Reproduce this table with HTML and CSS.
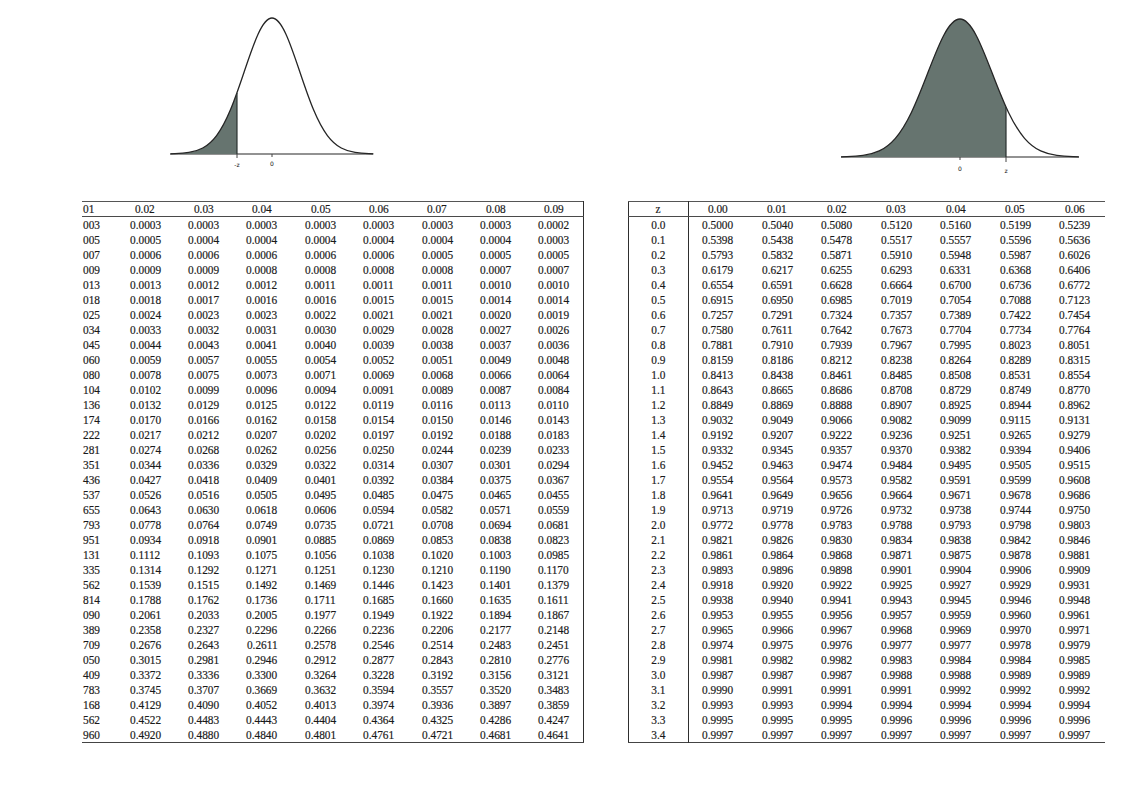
FILE: index.html
```html
<!DOCTYPE html>
<html lang="en">
<head>
<meta charset="utf-8">
<title>Standard normal distribution tables</title>
<link rel="stylesheet" href="styles.css">
</head>
<body>
<div class="page">
  <div class="figs">
    <svg class="fig fig-left" width="230" height="165" viewBox="0 0 230 165">
      <line class="base" x1="10" y1="144" x2="213" y2="144"/>
      <svg x="10.6" y="5.3" width="202.8" height="141.4" viewBox="-3.66 -1.02 7.32 1.04" preserveAspectRatio="none">
        <path class="shade" d="M-4,0 L-4,-0.000335 C-3.8333,-0.00056 -3.6667,-0.00091 -3.5,-0.00219 C-3.3333,-0.00347 -3.1667,-0.00555 -3,-0.01111 C-2.8333,-0.01667 -2.6667,-0.02563 -2.5,-0.04394 C-2.3333,-0.06225 -2.1667,-0.09023 -2,-0.13534 C-1.8333,-0.18045 -1.6667,-0.24349 -1.5,-0.32465 C-1.42167,-0.36279 -1.34333,-0.40476 -1.265,-0.44928 L-1.265,0 Z"/>
        <path class="curve" vector-effect="non-scaling-stroke" d="M-4,-0.000335 C-3.8333,-0.00056 -3.6667,-0.00091 -3.5,-0.00219 C-3.3333,-0.00347 -3.1667,-0.00555 -3,-0.01111 C-2.8333,-0.01667 -2.6667,-0.02563 -2.5,-0.04394 C-2.3333,-0.06225 -2.1667,-0.09023 -2,-0.13534 C-1.8333,-0.18045 -1.6667,-0.24349 -1.5,-0.32465 C-1.3333,-0.40581 -1.1667,-0.50544 -1,-0.60653 C-0.8333,-0.70762 -0.6667,-0.80896 -0.5,-0.8825 C-0.3333,-0.95604 -0.1667,-1 0,-1 C0.1667,-1 0.3333,-0.95604 0.5,-0.8825 C0.6667,-0.80896 0.8333,-0.70762 1,-0.60653 C1.1667,-0.50544 1.3333,-0.40581 1.5,-0.32465 C1.6667,-0.24349 1.8333,-0.18045 2,-0.13534 C2.1667,-0.09023 2.3333,-0.06225 2.5,-0.04394 C2.6667,-0.02563 2.8333,-0.01667 3,-0.01111 C3.1667,-0.00555 3.3333,-0.00347 3.5,-0.00219 C3.6667,-0.00091 3.8333,-0.00056 4,-0.000335"/>
        <line class="edge" vector-effect="non-scaling-stroke" x1="-1.265" y1="-0.44928" x2="-1.265" y2="0"/>
      </svg>
      <line class="tick" x1="77" y1="144" x2="77" y2="148"/>
      <line class="tick" x1="112" y1="144" x2="112" y2="147"/>
      <text class="lbl" x="77" y="157">-z</text>
      <text class="lbl" x="112" y="156">0</text>
    </svg>
    <svg class="fig fig-right" width="260" height="170" viewBox="0 0 260 170">
      <line class="base" x1="11" y1="147" x2="249" y2="147"/>
      <svg x="11.1" y="6.24" width="237.7" height="143.5" viewBox="-3.68 -1.02 7.36 1.04" preserveAspectRatio="none">
        <path class="shade" d="M-4,0 L-4,-0.000335 C-3.8333,-0.00056 -3.6667,-0.00091 -3.5,-0.00219 C-3.3333,-0.00347 -3.1667,-0.00555 -3,-0.01111 C-2.8333,-0.01667 -2.6667,-0.02563 -2.5,-0.04394 C-2.3333,-0.06225 -2.1667,-0.09023 -2,-0.13534 C-1.8333,-0.18045 -1.6667,-0.24349 -1.5,-0.32465 C-1.3333,-0.40581 -1.1667,-0.50544 -1,-0.60653 C-0.8333,-0.70762 -0.6667,-0.80896 -0.5,-0.8825 C-0.3333,-0.95604 -0.1667,-1 0,-1 C0.1667,-1 0.3333,-0.95604 0.5,-0.8825 C0.6667,-0.80896 0.8333,-0.70762 1,-0.60653 C1.14167,-0.5206 1.28333,-0.43543 1.425,-0.36229 L1.425,0 Z"/>
        <path class="curve" vector-effect="non-scaling-stroke" d="M-4,-0.000335 C-3.8333,-0.00056 -3.6667,-0.00091 -3.5,-0.00219 C-3.3333,-0.00347 -3.1667,-0.00555 -3,-0.01111 C-2.8333,-0.01667 -2.6667,-0.02563 -2.5,-0.04394 C-2.3333,-0.06225 -2.1667,-0.09023 -2,-0.13534 C-1.8333,-0.18045 -1.6667,-0.24349 -1.5,-0.32465 C-1.3333,-0.40581 -1.1667,-0.50544 -1,-0.60653 C-0.8333,-0.70762 -0.6667,-0.80896 -0.5,-0.8825 C-0.3333,-0.95604 -0.1667,-1 0,-1 C0.1667,-1 0.3333,-0.95604 0.5,-0.8825 C0.6667,-0.80896 0.8333,-0.70762 1,-0.60653 C1.1667,-0.50544 1.3333,-0.40581 1.5,-0.32465 C1.6667,-0.24349 1.8333,-0.18045 2,-0.13534 C2.1667,-0.09023 2.3333,-0.06225 2.5,-0.04394 C2.6667,-0.02563 2.8333,-0.01667 3,-0.01111 C3.1667,-0.00555 3.3333,-0.00347 3.5,-0.00219 C3.6667,-0.00091 3.8333,-0.00056 4,-0.000335"/>
        <line class="edge" vector-effect="non-scaling-stroke" x1="1.425" y1="-0.36229" x2="1.425" y2="0"/>
      </svg>
      <line class="tick" x1="176" y1="147" x2="176" y2="152"/>
      <line class="tick" x1="130" y1="147" x2="130" y2="150"/>
      <text class="lbl" x="130" y="161">0</text>
      <text class="lbl" x="176" y="163">z</text>
    </svg>
  </div>
  <div class="tables">
    <table class="t t-left">
      <colgroup><col class="c-cut"><col class="c-val"><col class="c-val"><col class="c-val"><col class="c-val"><col class="c-val"><col class="c-val"><col class="c-val"><col class="c-val"></colgroup>
      <thead>
        <tr><th class="cut"><span>01</span></th><th><span>0.02</span></th><th><span>0.03</span></th><th><span>0.04</span></th><th><span>0.05</span></th><th><span>0.06</span></th><th><span>0.07</span></th><th><span>0.08</span></th><th><span>0.09</span></th></tr>
      </thead>
      <tbody>
        <tr><td class="cut"><span>003</span></td><td><span>0.0003</span></td><td><span>0.0003</span></td><td><span>0.0003</span></td><td><span>0.0003</span></td><td><span>0.0003</span></td><td><span>0.0003</span></td><td><span>0.0003</span></td><td><span>0.0002</span></td></tr>
        <tr><td class="cut"><span>005</span></td><td><span>0.0005</span></td><td><span>0.0004</span></td><td><span>0.0004</span></td><td><span>0.0004</span></td><td><span>0.0004</span></td><td><span>0.0004</span></td><td><span>0.0004</span></td><td><span>0.0003</span></td></tr>
        <tr><td class="cut"><span>007</span></td><td><span>0.0006</span></td><td><span>0.0006</span></td><td><span>0.0006</span></td><td><span>0.0006</span></td><td><span>0.0006</span></td><td><span>0.0005</span></td><td><span>0.0005</span></td><td><span>0.0005</span></td></tr>
        <tr><td class="cut"><span>009</span></td><td><span>0.0009</span></td><td><span>0.0009</span></td><td><span>0.0008</span></td><td><span>0.0008</span></td><td><span>0.0008</span></td><td><span>0.0008</span></td><td><span>0.0007</span></td><td><span>0.0007</span></td></tr>
        <tr><td class="cut"><span>013</span></td><td><span>0.0013</span></td><td><span>0.0012</span></td><td><span>0.0012</span></td><td><span>0.0011</span></td><td><span>0.0011</span></td><td><span>0.0011</span></td><td><span>0.0010</span></td><td><span>0.0010</span></td></tr>
        <tr><td class="cut"><span>018</span></td><td><span>0.0018</span></td><td><span>0.0017</span></td><td><span>0.0016</span></td><td><span>0.0016</span></td><td><span>0.0015</span></td><td><span>0.0015</span></td><td><span>0.0014</span></td><td><span>0.0014</span></td></tr>
        <tr><td class="cut"><span>025</span></td><td><span>0.0024</span></td><td><span>0.0023</span></td><td><span>0.0023</span></td><td><span>0.0022</span></td><td><span>0.0021</span></td><td><span>0.0021</span></td><td><span>0.0020</span></td><td><span>0.0019</span></td></tr>
        <tr><td class="cut"><span>034</span></td><td><span>0.0033</span></td><td><span>0.0032</span></td><td><span>0.0031</span></td><td><span>0.0030</span></td><td><span>0.0029</span></td><td><span>0.0028</span></td><td><span>0.0027</span></td><td><span>0.0026</span></td></tr>
        <tr><td class="cut"><span>045</span></td><td><span>0.0044</span></td><td><span>0.0043</span></td><td><span>0.0041</span></td><td><span>0.0040</span></td><td><span>0.0039</span></td><td><span>0.0038</span></td><td><span>0.0037</span></td><td><span>0.0036</span></td></tr>
        <tr><td class="cut"><span>060</span></td><td><span>0.0059</span></td><td><span>0.0057</span></td><td><span>0.0055</span></td><td><span>0.0054</span></td><td><span>0.0052</span></td><td><span>0.0051</span></td><td><span>0.0049</span></td><td><span>0.0048</span></td></tr>
        <tr><td class="cut"><span>080</span></td><td><span>0.0078</span></td><td><span>0.0075</span></td><td><span>0.0073</span></td><td><span>0.0071</span></td><td><span>0.0069</span></td><td><span>0.0068</span></td><td><span>0.0066</span></td><td><span>0.0064</span></td></tr>
        <tr><td class="cut"><span>104</span></td><td><span>0.0102</span></td><td><span>0.0099</span></td><td><span>0.0096</span></td><td><span>0.0094</span></td><td><span>0.0091</span></td><td><span>0.0089</span></td><td><span>0.0087</span></td><td><span>0.0084</span></td></tr>
        <tr><td class="cut"><span>136</span></td><td><span>0.0132</span></td><td><span>0.0129</span></td><td><span>0.0125</span></td><td><span>0.0122</span></td><td><span>0.0119</span></td><td><span>0.0116</span></td><td><span>0.0113</span></td><td><span>0.0110</span></td></tr>
        <tr><td class="cut"><span>174</span></td><td><span>0.0170</span></td><td><span>0.0166</span></td><td><span>0.0162</span></td><td><span>0.0158</span></td><td><span>0.0154</span></td><td><span>0.0150</span></td><td><span>0.0146</span></td><td><span>0.0143</span></td></tr>
        <tr><td class="cut"><span>222</span></td><td><span>0.0217</span></td><td><span>0.0212</span></td><td><span>0.0207</span></td><td><span>0.0202</span></td><td><span>0.0197</span></td><td><span>0.0192</span></td><td><span>0.0188</span></td><td><span>0.0183</span></td></tr>
        <tr><td class="cut"><span>281</span></td><td><span>0.0274</span></td><td><span>0.0268</span></td><td><span>0.0262</span></td><td><span>0.0256</span></td><td><span>0.0250</span></td><td><span>0.0244</span></td><td><span>0.0239</span></td><td><span>0.0233</span></td></tr>
        <tr><td class="cut"><span>351</span></td><td><span>0.0344</span></td><td><span>0.0336</span></td><td><span>0.0329</span></td><td><span>0.0322</span></td><td><span>0.0314</span></td><td><span>0.0307</span></td><td><span>0.0301</span></td><td><span>0.0294</span></td></tr>
        <tr><td class="cut"><span>436</span></td><td><span>0.0427</span></td><td><span>0.0418</span></td><td><span>0.0409</span></td><td><span>0.0401</span></td><td><span>0.0392</span></td><td><span>0.0384</span></td><td><span>0.0375</span></td><td><span>0.0367</span></td></tr>
        <tr><td class="cut"><span>537</span></td><td><span>0.0526</span></td><td><span>0.0516</span></td><td><span>0.0505</span></td><td><span>0.0495</span></td><td><span>0.0485</span></td><td><span>0.0475</span></td><td><span>0.0465</span></td><td><span>0.0455</span></td></tr>
        <tr><td class="cut"><span>655</span></td><td><span>0.0643</span></td><td><span>0.0630</span></td><td><span>0.0618</span></td><td><span>0.0606</span></td><td><span>0.0594</span></td><td><span>0.0582</span></td><td><span>0.0571</span></td><td><span>0.0559</span></td></tr>
        <tr><td class="cut"><span>793</span></td><td><span>0.0778</span></td><td><span>0.0764</span></td><td><span>0.0749</span></td><td><span>0.0735</span></td><td><span>0.0721</span></td><td><span>0.0708</span></td><td><span>0.0694</span></td><td><span>0.0681</span></td></tr>
        <tr><td class="cut"><span>951</span></td><td><span>0.0934</span></td><td><span>0.0918</span></td><td><span>0.0901</span></td><td><span>0.0885</span></td><td><span>0.0869</span></td><td><span>0.0853</span></td><td><span>0.0838</span></td><td><span>0.0823</span></td></tr>
        <tr><td class="cut"><span>131</span></td><td><span>0.1112</span></td><td><span>0.1093</span></td><td><span>0.1075</span></td><td><span>0.1056</span></td><td><span>0.1038</span></td><td><span>0.1020</span></td><td><span>0.1003</span></td><td><span>0.0985</span></td></tr>
        <tr><td class="cut"><span>335</span></td><td><span>0.1314</span></td><td><span>0.1292</span></td><td><span>0.1271</span></td><td><span>0.1251</span></td><td><span>0.1230</span></td><td><span>0.1210</span></td><td><span>0.1190</span></td><td><span>0.1170</span></td></tr>
        <tr><td class="cut"><span>562</span></td><td><span>0.1539</span></td><td><span>0.1515</span></td><td><span>0.1492</span></td><td><span>0.1469</span></td><td><span>0.1446</span></td><td><span>0.1423</span></td><td><span>0.1401</span></td><td><span>0.1379</span></td></tr>
        <tr><td class="cut"><span>814</span></td><td><span>0.1788</span></td><td><span>0.1762</span></td><td><span>0.1736</span></td><td><span>0.1711</span></td><td><span>0.1685</span></td><td><span>0.1660</span></td><td><span>0.1635</span></td><td><span>0.1611</span></td></tr>
        <tr><td class="cut"><span>090</span></td><td><span>0.2061</span></td><td><span>0.2033</span></td><td><span>0.2005</span></td><td><span>0.1977</span></td><td><span>0.1949</span></td><td><span>0.1922</span></td><td><span>0.1894</span></td><td><span>0.1867</span></td></tr>
        <tr><td class="cut"><span>389</span></td><td><span>0.2358</span></td><td><span>0.2327</span></td><td><span>0.2296</span></td><td><span>0.2266</span></td><td><span>0.2236</span></td><td><span>0.2206</span></td><td><span>0.2177</span></td><td><span>0.2148</span></td></tr>
        <tr><td class="cut"><span>709</span></td><td><span>0.2676</span></td><td><span>0.2643</span></td><td><span>0.2611</span></td><td><span>0.2578</span></td><td><span>0.2546</span></td><td><span>0.2514</span></td><td><span>0.2483</span></td><td><span>0.2451</span></td></tr>
        <tr><td class="cut"><span>050</span></td><td><span>0.3015</span></td><td><span>0.2981</span></td><td><span>0.2946</span></td><td><span>0.2912</span></td><td><span>0.2877</span></td><td><span>0.2843</span></td><td><span>0.2810</span></td><td><span>0.2776</span></td></tr>
        <tr><td class="cut"><span>409</span></td><td><span>0.3372</span></td><td><span>0.3336</span></td><td><span>0.3300</span></td><td><span>0.3264</span></td><td><span>0.3228</span></td><td><span>0.3192</span></td><td><span>0.3156</span></td><td><span>0.3121</span></td></tr>
        <tr><td class="cut"><span>783</span></td><td><span>0.3745</span></td><td><span>0.3707</span></td><td><span>0.3669</span></td><td><span>0.3632</span></td><td><span>0.3594</span></td><td><span>0.3557</span></td><td><span>0.3520</span></td><td><span>0.3483</span></td></tr>
        <tr><td class="cut"><span>168</span></td><td><span>0.4129</span></td><td><span>0.4090</span></td><td><span>0.4052</span></td><td><span>0.4013</span></td><td><span>0.3974</span></td><td><span>0.3936</span></td><td><span>0.3897</span></td><td><span>0.3859</span></td></tr>
        <tr><td class="cut"><span>562</span></td><td><span>0.4522</span></td><td><span>0.4483</span></td><td><span>0.4443</span></td><td><span>0.4404</span></td><td><span>0.4364</span></td><td><span>0.4325</span></td><td><span>0.4286</span></td><td><span>0.4247</span></td></tr>
        <tr><td class="cut"><span>960</span></td><td><span>0.4920</span></td><td><span>0.4880</span></td><td><span>0.4840</span></td><td><span>0.4801</span></td><td><span>0.4761</span></td><td><span>0.4721</span></td><td><span>0.4681</span></td><td><span>0.4641</span></td></tr>
      </tbody>
    </table>
    <table class="t t-right">
      <colgroup><col class="c-z"><col class="c-val2"><col class="c-val2"><col class="c-val2"><col class="c-val2"><col class="c-val2"><col class="c-val2"><col class="c-val2"></colgroup>
      <thead>
        <tr><th class="z"><span>z</span></th><th><span>0.00</span></th><th><span>0.01</span></th><th><span>0.02</span></th><th><span>0.03</span></th><th><span>0.04</span></th><th><span>0.05</span></th><th><span>0.06</span></th></tr>
      </thead>
      <tbody>
        <tr><td class="z"><span>0.0</span></td><td><span>0.5000</span></td><td><span>0.5040</span></td><td><span>0.5080</span></td><td><span>0.5120</span></td><td><span>0.5160</span></td><td><span>0.5199</span></td><td><span>0.5239</span></td></tr>
        <tr><td class="z"><span>0.1</span></td><td><span>0.5398</span></td><td><span>0.5438</span></td><td><span>0.5478</span></td><td><span>0.5517</span></td><td><span>0.5557</span></td><td><span>0.5596</span></td><td><span>0.5636</span></td></tr>
        <tr><td class="z"><span>0.2</span></td><td><span>0.5793</span></td><td><span>0.5832</span></td><td><span>0.5871</span></td><td><span>0.5910</span></td><td><span>0.5948</span></td><td><span>0.5987</span></td><td><span>0.6026</span></td></tr>
        <tr><td class="z"><span>0.3</span></td><td><span>0.6179</span></td><td><span>0.6217</span></td><td><span>0.6255</span></td><td><span>0.6293</span></td><td><span>0.6331</span></td><td><span>0.6368</span></td><td><span>0.6406</span></td></tr>
        <tr><td class="z"><span>0.4</span></td><td><span>0.6554</span></td><td><span>0.6591</span></td><td><span>0.6628</span></td><td><span>0.6664</span></td><td><span>0.6700</span></td><td><span>0.6736</span></td><td><span>0.6772</span></td></tr>
        <tr><td class="z"><span>0.5</span></td><td><span>0.6915</span></td><td><span>0.6950</span></td><td><span>0.6985</span></td><td><span>0.7019</span></td><td><span>0.7054</span></td><td><span>0.7088</span></td><td><span>0.7123</span></td></tr>
        <tr><td class="z"><span>0.6</span></td><td><span>0.7257</span></td><td><span>0.7291</span></td><td><span>0.7324</span></td><td><span>0.7357</span></td><td><span>0.7389</span></td><td><span>0.7422</span></td><td><span>0.7454</span></td></tr>
        <tr><td class="z"><span>0.7</span></td><td><span>0.7580</span></td><td><span>0.7611</span></td><td><span>0.7642</span></td><td><span>0.7673</span></td><td><span>0.7704</span></td><td><span>0.7734</span></td><td><span>0.7764</span></td></tr>
        <tr><td class="z"><span>0.8</span></td><td><span>0.7881</span></td><td><span>0.7910</span></td><td><span>0.7939</span></td><td><span>0.7967</span></td><td><span>0.7995</span></td><td><span>0.8023</span></td><td><span>0.8051</span></td></tr>
        <tr><td class="z"><span>0.9</span></td><td><span>0.8159</span></td><td><span>0.8186</span></td><td><span>0.8212</span></td><td><span>0.8238</span></td><td><span>0.8264</span></td><td><span>0.8289</span></td><td><span>0.8315</span></td></tr>
        <tr><td class="z"><span>1.0</span></td><td><span>0.8413</span></td><td><span>0.8438</span></td><td><span>0.8461</span></td><td><span>0.8485</span></td><td><span>0.8508</span></td><td><span>0.8531</span></td><td><span>0.8554</span></td></tr>
        <tr><td class="z"><span>1.1</span></td><td><span>0.8643</span></td><td><span>0.8665</span></td><td><span>0.8686</span></td><td><span>0.8708</span></td><td><span>0.8729</span></td><td><span>0.8749</span></td><td><span>0.8770</span></td></tr>
        <tr><td class="z"><span>1.2</span></td><td><span>0.8849</span></td><td><span>0.8869</span></td><td><span>0.8888</span></td><td><span>0.8907</span></td><td><span>0.8925</span></td><td><span>0.8944</span></td><td><span>0.8962</span></td></tr>
        <tr><td class="z"><span>1.3</span></td><td><span>0.9032</span></td><td><span>0.9049</span></td><td><span>0.9066</span></td><td><span>0.9082</span></td><td><span>0.9099</span></td><td><span>0.9115</span></td><td><span>0.9131</span></td></tr>
        <tr><td class="z"><span>1.4</span></td><td><span>0.9192</span></td><td><span>0.9207</span></td><td><span>0.9222</span></td><td><span>0.9236</span></td><td><span>0.9251</span></td><td><span>0.9265</span></td><td><span>0.9279</span></td></tr>
        <tr><td class="z"><span>1.5</span></td><td><span>0.9332</span></td><td><span>0.9345</span></td><td><span>0.9357</span></td><td><span>0.9370</span></td><td><span>0.9382</span></td><td><span>0.9394</span></td><td><span>0.9406</span></td></tr>
        <tr><td class="z"><span>1.6</span></td><td><span>0.9452</span></td><td><span>0.9463</span></td><td><span>0.9474</span></td><td><span>0.9484</span></td><td><span>0.9495</span></td><td><span>0.9505</span></td><td><span>0.9515</span></td></tr>
        <tr><td class="z"><span>1.7</span></td><td><span>0.9554</span></td><td><span>0.9564</span></td><td><span>0.9573</span></td><td><span>0.9582</span></td><td><span>0.9591</span></td><td><span>0.9599</span></td><td><span>0.9608</span></td></tr>
        <tr><td class="z"><span>1.8</span></td><td><span>0.9641</span></td><td><span>0.9649</span></td><td><span>0.9656</span></td><td><span>0.9664</span></td><td><span>0.9671</span></td><td><span>0.9678</span></td><td><span>0.9686</span></td></tr>
        <tr><td class="z"><span>1.9</span></td><td><span>0.9713</span></td><td><span>0.9719</span></td><td><span>0.9726</span></td><td><span>0.9732</span></td><td><span>0.9738</span></td><td><span>0.9744</span></td><td><span>0.9750</span></td></tr>
        <tr><td class="z"><span>2.0</span></td><td><span>0.9772</span></td><td><span>0.9778</span></td><td><span>0.9783</span></td><td><span>0.9788</span></td><td><span>0.9793</span></td><td><span>0.9798</span></td><td><span>0.9803</span></td></tr>
        <tr><td class="z"><span>2.1</span></td><td><span>0.9821</span></td><td><span>0.9826</span></td><td><span>0.9830</span></td><td><span>0.9834</span></td><td><span>0.9838</span></td><td><span>0.9842</span></td><td><span>0.9846</span></td></tr>
        <tr><td class="z"><span>2.2</span></td><td><span>0.9861</span></td><td><span>0.9864</span></td><td><span>0.9868</span></td><td><span>0.9871</span></td><td><span>0.9875</span></td><td><span>0.9878</span></td><td><span>0.9881</span></td></tr>
        <tr><td class="z"><span>2.3</span></td><td><span>0.9893</span></td><td><span>0.9896</span></td><td><span>0.9898</span></td><td><span>0.9901</span></td><td><span>0.9904</span></td><td><span>0.9906</span></td><td><span>0.9909</span></td></tr>
        <tr><td class="z"><span>2.4</span></td><td><span>0.9918</span></td><td><span>0.9920</span></td><td><span>0.9922</span></td><td><span>0.9925</span></td><td><span>0.9927</span></td><td><span>0.9929</span></td><td><span>0.9931</span></td></tr>
        <tr><td class="z"><span>2.5</span></td><td><span>0.9938</span></td><td><span>0.9940</span></td><td><span>0.9941</span></td><td><span>0.9943</span></td><td><span>0.9945</span></td><td><span>0.9946</span></td><td><span>0.9948</span></td></tr>
        <tr><td class="z"><span>2.6</span></td><td><span>0.9953</span></td><td><span>0.9955</span></td><td><span>0.9956</span></td><td><span>0.9957</span></td><td><span>0.9959</span></td><td><span>0.9960</span></td><td><span>0.9961</span></td></tr>
        <tr><td class="z"><span>2.7</span></td><td><span>0.9965</span></td><td><span>0.9966</span></td><td><span>0.9967</span></td><td><span>0.9968</span></td><td><span>0.9969</span></td><td><span>0.9970</span></td><td><span>0.9971</span></td></tr>
        <tr><td class="z"><span>2.8</span></td><td><span>0.9974</span></td><td><span>0.9975</span></td><td><span>0.9976</span></td><td><span>0.9977</span></td><td><span>0.9977</span></td><td><span>0.9978</span></td><td><span>0.9979</span></td></tr>
        <tr><td class="z"><span>2.9</span></td><td><span>0.9981</span></td><td><span>0.9982</span></td><td><span>0.9982</span></td><td><span>0.9983</span></td><td><span>0.9984</span></td><td><span>0.9984</span></td><td><span>0.9985</span></td></tr>
        <tr><td class="z"><span>3.0</span></td><td><span>0.9987</span></td><td><span>0.9987</span></td><td><span>0.9987</span></td><td><span>0.9988</span></td><td><span>0.9988</span></td><td><span>0.9989</span></td><td><span>0.9989</span></td></tr>
        <tr><td class="z"><span>3.1</span></td><td><span>0.9990</span></td><td><span>0.9991</span></td><td><span>0.9991</span></td><td><span>0.9991</span></td><td><span>0.9992</span></td><td><span>0.9992</span></td><td><span>0.9992</span></td></tr>
        <tr><td class="z"><span>3.2</span></td><td><span>0.9993</span></td><td><span>0.9993</span></td><td><span>0.9994</span></td><td><span>0.9994</span></td><td><span>0.9994</span></td><td><span>0.9994</span></td><td><span>0.9994</span></td></tr>
        <tr><td class="z"><span>3.3</span></td><td><span>0.9995</span></td><td><span>0.9995</span></td><td><span>0.9995</span></td><td><span>0.9996</span></td><td><span>0.9996</span></td><td><span>0.9996</span></td><td><span>0.9996</span></td></tr>
        <tr><td class="z"><span>3.4</span></td><td><span>0.9997</span></td><td><span>0.9997</span></td><td><span>0.9997</span></td><td><span>0.9997</span></td><td><span>0.9997</span></td><td><span>0.9997</span></td><td><span>0.9997</span></td></tr>
      </tbody>
    </table>
  </div>
</div>
</body>
</html>
```
FILE: styles.css
```css
html, body {
  margin: 0;
  padding: 0;
  background: #ffffff;
}

.page {
  width: 1122px;
  height: 794px;
  padding-top: 10px;
  box-sizing: border-box;
  overflow: hidden;
  font-family: "Liberation Serif", "DejaVu Serif", serif;
  color: #1a1a1a;
}

/* ---------- curves ---------- */
.figs {
  display: flex;
  align-items: flex-start;
  height: 191px;
  padding-left: 160px;
  gap: 440px;
}

.fig {
  display: block;
  flex: none;
  overflow: visible;
}

.fig .base {
  stroke: #6e6e6e;
  stroke-width: 1.3;
}

.fig .curve {
  fill: none;
  stroke: #262626;
  stroke-width: 1.3;
}

.fig .shade {
  fill: #66746f;
}

.fig .edge {
  stroke: #2e3634;
  stroke-width: 1.3;
}

.fig .tick {
  stroke: #444444;
  stroke-width: 1;
}

.fig .lbl {
  font-family: "DejaVu Sans", sans-serif;
  font-size: 6px;
  fill: #111111;
  text-anchor: middle;
}

/* ---------- tables ---------- */
.tables {
  display: flex;
  align-items: flex-start;
  padding-left: 82px;
  gap: 44px;
}

.t {
  border-collapse: collapse;
  table-layout: fixed;
  font-size: 13.5px;
  line-height: 15px;
  border-top: 1.5px solid #555555;
  border-bottom: 1.5px solid #444444;
  -webkit-text-stroke: 0.2px #1a1a1a;
}

.t th,
.t td {
  padding: 0;
  text-align: center;
  font-weight: normal;
  white-space: nowrap;
  height: 15px;
}

.t th {
  height: 14px;
  line-height: 14px;
  border-bottom: 1.5px solid #4a4a4a;
}

.t span {
  display: inline-block;
  transform: scaleX(0.84);
}

.t-left {
  width: 501px;
  border-right: 1px solid #2e2e2e;
}

.t-left .c-cut {
  width: 34px;
}

.t-left .c-val {
  width: 58.375px;
}

.t-left .cut {
  text-align: left;
  padding-left: 1px;
}

.t-left .cut span {
  transform-origin: left center;
}

.t-right {
  width: 477px;
  border-left: 1px solid #2e2e2e;
}

.t-right .c-z {
  width: 60px;
}

.t-right .c-val2 {
  width: 59.5px;
}

.t-right .z {
  border-right: 1px solid #2e2e2e;
}
```
